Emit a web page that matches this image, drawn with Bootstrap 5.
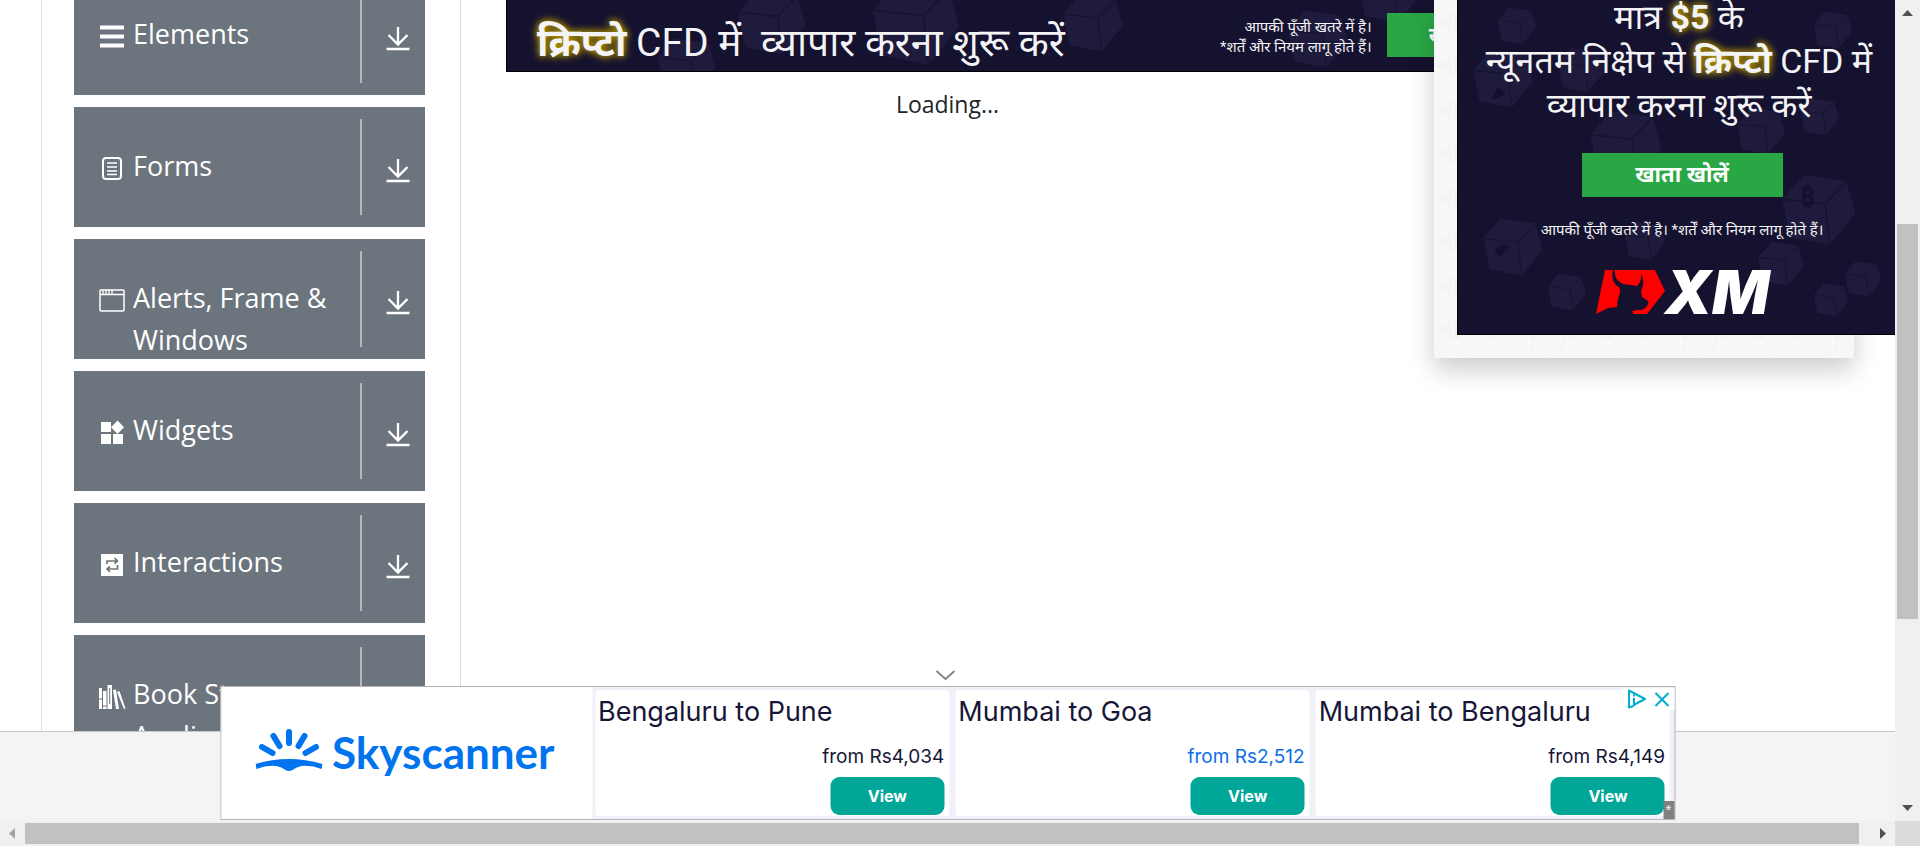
<!DOCTYPE html>
<html lang="en">
<head>
<meta charset="utf-8">
<meta name="viewport" content="width=device-width, initial-scale=1">
<title>Practice site</title>
<link rel="stylesheet" href="https://cdn.jsdelivr.net/npm/bootstrap@5.3.0/dist/css/bootstrap.min.css">
<script src="https://cdn.jsdelivr.net/npm/bootstrap@5.3.0/dist/js/bootstrap.bundle.min.js"></script>
<style>
  body { font-family: "Open Sans", "Noto Sans", sans-serif; color: #212529; background: #fff; }
  .page-body { display: grid; grid-template-columns: 420px minmax(0, 1fr) 420px; padding: 0 41px; }
  .side-menu { border: solid #dcdcdc; border-width: 0 1px; padding: 0 35px 0 32px; }
  .menu-stack { gap: 12px; margin-top: -25px; }
  .menu-tile { height: 120px; padding: 12px 14px 12px 24px; border: 0; background: #6c757d; color: #fff; font-size: 27px; line-height: 42px; }
  .menu-tile .tile-icon { width: 28px; height: 28px; margin: 35px 7px 0 0; }
  .menu-tile .tile-name { height: 108px; padding-top: 26px; }
  .menu-tile .tile-arrow { width: 51px; height: 96px; padding: 40px 0 0 24px; border-left: 2px solid #b9b7b3; }
  .site-footer { height: 90px; background: #f4f4f4; border-top: 1px solid #c8c8c8; }

  .promo { background: #15122f; color: #f4f4f6; font-family: Roboto, "Noto Sans Devanagari", "Noto Sans", sans-serif; border: solid #000; border-width: 0 1px 1px; }
  .promo-wide { width: 1092px; height: 72px; margin-left: 45px; }
  .promo-wide .wide-copy { padding: 13px 33px 0 30px; }
  .promo-wide .headline { font-size: 39px; line-height: 60px; }
  .promo-wide .terms { font-size: 15px; line-height: 20px; padding-top: 4px; }
  .promo-wide .promo-go { margin-left: 15px; padding: 0 42px; }
  .promo .glow { font-weight: 700; text-shadow: 0 0 6px #b89700, 0 0 10px #a58a00; }
  .promo-go { background: #29a744; color: #fff; border: 0; font-size: 22px; font-weight: 700; height: 44px; }
  .loading-line { font-size: 23px; line-height: 36px; padding-top: 14px; }
  .side-promo { height: 358px; padding: 0 0 23px 23px; background: #f7f7f7; box-shadow: 0 12px 24px rgba(0,0,0,.2); }
  .promo-tall { width: 450px; height: 335px; }
  .promo-tall .headline { font-size: 34px; line-height: 44px; margin-top: -5px; padding-right: 6px; }
  .promo-tall .promo-go { width: 201px; margin: 26px auto 0; line-height: 40px; }
  .promo-tall .terms { font-size: 15px; line-height: 20px; margin-top: 23px; }
  .brand-line { height: 46px; margin-top: 29px; }
  .brand-word { font-family: Inter, sans-serif; font-weight: 900; font-style: italic; font-size: 60px; line-height: 46px; color: #fff; }

  .dock { bottom: 0; left: 50%; width: 1455px; max-width: 100%; transform: translateX(-50%); }
  .dock-toggle { width: 30px; height: 22px; background: none; margin-right: 5px; }
  .dock-box { height: 134px; margin-bottom: 1px; background: #f0f0f8; border: 1px solid #b4b4b4; font-family: "Lato", sans-serif; color: #161637; }
  .dock-brand { width: 371px; background: #fff; color: #0073ee; padding-left: 34px; gap: 10px; padding-bottom: 6px; }
  .dock-brand .name { font-size: 44px; line-height: 50px; font-weight: 700; padding-top: 4px; }
  .fares { gap: 6px; padding: 3px; padding-right: 4px; }
  .fare { background: #fff; border-radius: 3px; padding: 5px 5px 0 3px; }
  .fare h2 { font-family: Inter, sans-serif; font-size: 27px; line-height: 34px; font-weight: 400; margin: 0; }
  .fare .price { font-family: Inter, sans-serif; font-size: 19px; line-height: 26px; margin-top: 15px; }
  .fare .price a { color: inherit; text-decoration: none; }
  .fare.picked .price { color: #0a6eeb; }
  .fare .view { width: 114px; height: 38px; border: 0; border-radius: 9px; background: #00a698; color: #fff; font-family: Inter, sans-serif; font-size: 16px; font-weight: 700; margin-top: 7px; }
  .choices { top: 1px; right: 0; width: 52px; height: 22px; background: #fff; }
  .star-tag { right: 0; bottom: 0; width: 11px; height: 18px; background: #808080; color: #fff; font: 14px/18px "Liberation Sans", sans-serif; }

  .bar { background: #f0f0f0; }
  .bar-v { width: 25px; }
  .bar-h { height: 25px; }
  .bar .thumb { background: #c1c1c1; }
  .bar-corner { width: 25px; background: #dcdcdc; }
</style>
</head>
<body class="vh-100 d-flex flex-column overflow-hidden">

<svg class="d-none" aria-hidden="true">
  <symbol id="down" viewBox="0 0 24 24"><path d="M12 0V17M2.500 8L12 17.500L21.500 8M.5 22H23.500" fill="none" stroke="#fff" stroke-width="2.300"/></symbol>
  <symbol id="cube" viewBox="0 0 100 100"><path fill="#1e1b3d" d="M30 4L86 12L98 54L64 96L12 86L2 36Z"/><path d="M2 36L58 42L86 12M58 42L64 96" fill="none" stroke="#17142f" stroke-width="2"/></symbol>
  <symbol id="choice" viewBox="0 0 20 20"><path d="M7 17L2.500 18.500V1.500L18.500 10L8 15.500" fill="none" stroke="#00aecd" stroke-width="2" stroke-linejoin="round"/><path d="M7.500 9V17M7.500 5.500V7.500" stroke="#00aecd" stroke-width="2"/></symbol>
</svg>

<div class="d-flex flex-grow-1 overflow-hidden">
  <div class="d-flex flex-column flex-grow-1 overflow-hidden position-relative">

    <div class="page-body flex-grow-1 overflow-hidden">
      <nav class="side-menu">
        <div class="menu-stack d-flex flex-column">
          <button class="menu-tile d-flex text-start overflow-hidden">
            <svg class="tile-icon flex-shrink-0" viewBox="0 0 28 28"><path d="M2 5.500H26M2 14.500H26M2 23.500H26" stroke="#fff" stroke-width="4"/></svg>
            <span class="tile-name flex-grow-1">Elements</span>
            <span class="tile-arrow flex-shrink-0 d-block"><svg class="d-block" width="24" height="24"><use href="#down"/></svg></span>
          </button>
          <button class="menu-tile d-flex text-start overflow-hidden">
            <svg class="tile-icon flex-shrink-0" viewBox="0 0 28 28"><rect x="5" y="4" width="18" height="21" rx="3" fill="none" stroke="#fff" stroke-width="2"/><path d="M9 9H19M9 13H19M9 17H19M9 20.500H19" stroke="#fff" stroke-width="1.300"/></svg>
            <span class="tile-name flex-grow-1">Forms</span>
            <span class="tile-arrow flex-shrink-0 d-block"><svg class="d-block" width="24" height="24"><use href="#down"/></svg></span>
          </button>
          <button class="menu-tile d-flex text-start overflow-hidden">
            <svg class="tile-icon flex-shrink-0" viewBox="0 0 28 28"><rect x="2" y="4" width="24" height="21" rx="1" fill="none" stroke="#fff" stroke-width="1.500"/><path d="M2 8.500H26M5 4V8M8 4V8M11 4V8M14 4V8" stroke="#fff" stroke-width="1.300"/></svg>
            <span class="tile-name flex-grow-1">Alerts, Frame &amp; Windows</span>
            <span class="tile-arrow flex-shrink-0 d-block"><svg class="d-block" width="24" height="24"><use href="#down"/></svg></span>
          </button>
          <button class="menu-tile d-flex text-start overflow-hidden">
            <svg class="tile-icon flex-shrink-0" viewBox="0 0 28 28"><path d="M3 4H13V14H3ZM3 16H13V26H3ZM15 16H25V26H15ZM19.500 2.500L26 9.300L19.500 16L13 9.300Z" fill="#fff"/></svg>
            <span class="tile-name flex-grow-1">Widgets</span>
            <span class="tile-arrow flex-shrink-0 d-block"><svg class="d-block" width="24" height="24"><use href="#down"/></svg></span>
          </button>
          <button class="menu-tile d-flex text-start overflow-hidden">
            <svg class="tile-icon flex-shrink-0" viewBox="0 0 28 28"><path d="M3 4H25V26H3Z" fill="#fff"/><path d="M9 14V11H18M19.500 15V19H10M16.500 8L19.500 11L16.500 13.500M12 16.500L9 19L12 22" fill="none" stroke="#6c757d" stroke-width="1.700"/></svg>
            <span class="tile-name flex-grow-1">Interactions</span>
            <span class="tile-arrow flex-shrink-0 d-block"><svg class="d-block" width="24" height="24"><use href="#down"/></svg></span>
          </button>
          <button class="menu-tile d-flex text-start overflow-hidden">
            <svg class="tile-icon flex-shrink-0" viewBox="0 0 28 28"><path d="M1 6H4V27H1ZM5 9H8.500V27H5ZM9.500 3H14V27H9.500ZM15 8L18 7.500L21 27H18ZM19 10L21.500 9L27.500 26.500L26 27Z" fill="#fff"/><path d="M1 17H4M5 24H8.500M11.700 6V22" stroke="#6c757d"/></svg>
            <span class="tile-name flex-grow-1">Book Store Application</span>
            <span class="tile-arrow flex-shrink-0 d-block"><svg class="d-block" width="24" height="24"><use href="#down"/></svg></span>
          </button>
        </div>
      </nav>

      <main>
        <div class="promo promo-wide position-relative overflow-hidden" lang="hi">
          <svg class="position-absolute top-0 start-0 w-100 h-100" aria-hidden="true">
            <use href="#cube" x="230" y="-20" width="70" height="84"/><use href="#cube" x="364" y="-26" width="90" height="98"/><use href="#cube" x="555" y="-10" width="62" height="66"/><use href="#cube" x="780" y="8" width="62" height="62"/><use href="#cube" x="850" y="-42" width="64" height="70"/><use href="#cube" x="150" y="36" width="60" height="60"/>
          </svg>
          <div class="wide-copy position-relative d-flex">
            <div class="headline text-nowrap flex-shrink-0"><span class="glow">क्रिप्टो</span> CFD में&nbsp; व्यापार करना शुरू करें</div>
            <div class="terms text-end text-nowrap flex-grow-1">आपकी पूँजी खतरे में है।<br>*शर्तें और नियम लागू होते हैं।</div>
            <button class="promo-go flex-shrink-0">खाता खोलें</button>
          </div>
        </div>
        <div class="loading-line text-center">Loading...</div>
      </main>

      <aside class="side-promo position-relative z-1">
        <svg class="position-absolute top-0 start-0 w-100 h-100" aria-hidden="true">
          <defs><pattern id="facets" width="38" height="44" patternUnits="userSpaceOnUse"><path d="M0 22L19 10L38 22L19 34Z" fill="#f4f4f4"/><path d="M0 22L38 44M0 22L38 0M19 0V44" stroke="#fcfcfc" fill="none"/></pattern></defs>
          <rect width="100%" height="100%" fill="url(#facets)"/>
        </svg>
        <div class="promo promo-tall position-relative overflow-hidden" lang="hi">
          <svg class="position-absolute top-0 start-0 w-100 h-100" aria-hidden="true">
            <use href="#cube" x="14" y="46" width="62" height="66"/><use href="#cube" x="36" y="6" width="46" height="40"/><use href="#cube" x="96" y="46" width="54" height="48"/><use href="#cube" x="130" y="108" width="76" height="74"/><use href="#cube" x="278" y="106" width="50" height="50"/><use href="#cube" x="342" y="96" width="40" height="42"/><use href="#cube" x="320" y="172" width="82" height="76"/><use href="#cube" x="24" y="216" width="62" height="62"/><use href="#cube" x="88" y="272" width="42" height="40"/><use href="#cube" x="294" y="240" width="58" height="48"/><use href="#cube" x="386" y="258" width="38" height="42"/><use href="#cube" x="354" y="282" width="38" height="36"/><use href="#cube" x="166" y="218" width="42" height="46"/><use href="#cube" x="350" y="10" width="50" height="40"/>
            <text x="342" y="206" font-size="26" font-weight="700" fill="#141130">₿</text>
            <path d="M36 250L46 244L52 247L42 257ZM34 100L48 94L40 86Z" fill="#141130"/>
          </svg>
          <div class="position-relative text-center">
            <div class="headline text-nowrap">मात्र <span class="glow">$5</span> के<br>न्यूनतम निक्षेप से <span class="glow">क्रिप्टो</span> CFD में<br>व्यापार करना शुरू करें</div>
            <button class="promo-go d-block p-0">खाता खोलें</button>
            <div class="terms text-nowrap">आपकी पूँजी खतरे में है। *शर्तें और नियम लागू होते हैं।</div>
            <div class="brand-line d-flex justify-content-center">
              <svg width="70" height="46" viewBox="0 0 70 46" class="flex-shrink-0" aria-hidden="true"><path fill="#f00" d="M10 1H60L70 22L52 45H39L37 42L28 30L22 38L13 39L1 45Z"/><path fill="#15122f" d="M18 0C16 9 18 15 24 18C26 22 25 24 24 27C22 32 22 37 23 39L20 46H39L37 43C40 40 45 42 49 40C52 38 54 35 53 32L47 28L46 21C49 17 49 11 46 5C46 11 45 15 41 17C36 15 32 16 29 15C23 13 20 9 20 3Z"/><path fill="#f00" d="M20 1H45L46 5C46 11 45 15 41 17C36 15 32 16 29 15C23 13 20 9 20 1ZM37 42C42 41 48 43 52 37L56 39L51 45H39Z"/></svg>
              <span class="brand-word">XM</span>
            </div>
          </div>
        </div>
      </aside>
    </div>

    <footer class="site-footer flex-shrink-0"></footer>

    <div class="dock position-absolute z-2 d-flex flex-column align-items-center">
      <button class="dock-toggle border-0 p-0" aria-label="Hide"><svg class="d-block mx-auto" width="20" height="16" viewBox="0 0 20 16"><path d="M1 4L10 12L19 4" fill="none" stroke="#808080" stroke-width="1.700"/></svg></button>
      <div class="dock-box w-100 d-flex position-relative">
        <div class="dock-brand flex-shrink-0 d-flex align-items-center">
          <svg width="67" height="42" viewBox="0 0 67 42" class="flex-shrink-0" aria-hidden="true"><path d="M33.500 3V14M18 7L24 17M49 7L43 17M6.500 18L17 24M60.500 18L50 24" stroke="#0073ee" stroke-width="6" stroke-linecap="round"/><path d="M0 35Q33 25 67 35L66 40Q56 36 46 37Q41 38 37 41Q33.500 43 30 41Q26 38 21 37Q11 36 1 40Z" fill="#0073ee"/></svg>
          <span class="name">Skyscanner</span>
        </div>
        <div class="fares d-flex flex-grow-1">
          <section class="fare flex-fill w-100 d-flex flex-column">
            <h2>Bengaluru to Pune</h2>
            <div class="price text-end"><a href="#">from Rs4,034</a></div>
            <button class="view align-self-end">View</button>
          </section>
          <section class="fare picked flex-fill w-100 d-flex flex-column">
            <h2>Mumbai to Goa</h2>
            <div class="price text-end"><a href="#">from Rs2,512</a></div>
            <button class="view align-self-end">View</button>
          </section>
          <section class="fare flex-fill w-100 d-flex flex-column">
            <h2>Mumbai to Bengaluru</h2>
            <div class="price text-end"><a href="#">from Rs4,149</a></div>
            <button class="view align-self-end">View</button>
          </section>
        </div>
        <div class="choices position-absolute d-flex align-items-center gap-2">
          <a class="d-flex" href="#" aria-label="Ad choices"><svg width="20" height="20" class="ms-1"><use href="#choice"/></svg></a>
          <button class="border-0 p-0 bg-transparent d-flex" aria-label="Close ad"><svg width="15" height="15" viewBox="0 0 15 15"><path d="M1 1L14 14M14 1L1 14" stroke="#00aecd" stroke-width="2"/></svg></button>
        </div>
        <div class="star-tag position-absolute text-center">*</div>
      </div>
    </div>
  </div>

  <div class="bar bar-v flex-shrink-0 d-flex flex-column">
    <svg class="flex-shrink-0" width="25" height="25"><path d="M7 16L12.500 10L18 16Z" fill="#505050"/></svg>
    <div class="flex-grow-1 px-0">
      <div style="height:25.8%"></div>
      <div class="thumb mx-auto" style="height:51.2%;width:84%"></div>
    </div>
    <svg class="flex-shrink-0" width="25" height="25"><path d="M7 9L12.500 15L18 9Z" fill="#505050"/></svg>
  </div>
</div>

<div class="bar bar-h flex-shrink-0 d-flex">
  <svg class="flex-shrink-0" width="25" height="25"><path d="M15 7L9 12.500L15 18Z" fill="#a3a3a3"/></svg>
  <div class="flex-grow-1 d-flex align-items-center"><div class="thumb" style="width:99.4%;height:84%"></div></div>
  <svg class="flex-shrink-0" width="25" height="25"><path d="M10 7L16 12.500L10 18Z" fill="#505050"/></svg>
  <div class="bar-corner flex-shrink-0"></div>
</div>

</body>
</html>
